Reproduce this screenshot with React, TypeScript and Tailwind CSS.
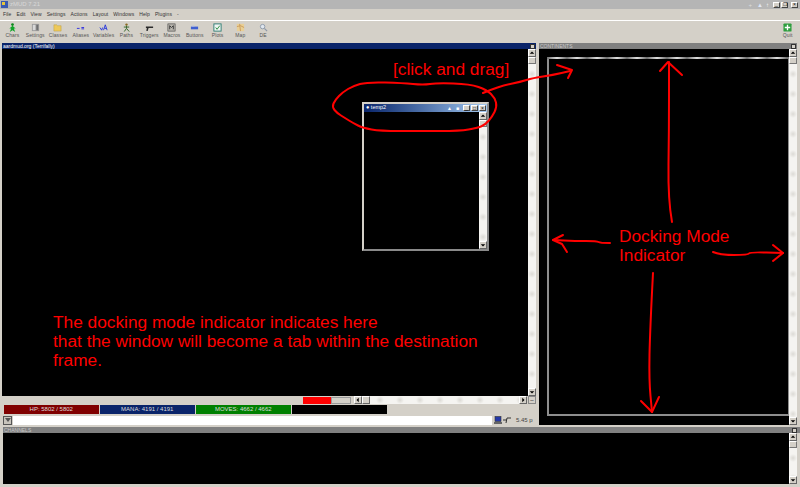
const menus = ['File', 'Edit', 'View', 'Settings', 'Actions', 'Layout', 'Windows', 'Help', 'Plugins', '-'];

function ToolIcon({ name }: { name: string }) {
  switch (name) {
    case 'Chars':
      return (
        <svg width="9" height="9" viewBox="0 0 10 10">
          <circle cx="5" cy="1.8" r="1.5" fill="#0a8a1a" />
          <path d="M5 3 8.500 6 6.500 6 8 10 5 8 2 10 3.500 6 1.500 6Z" fill="#12a52a" />
        </svg>
      );
    case 'Settings':
      return (
        <svg width="9" height="9" viewBox="0 0 10 10">
          <rect x="1" y="1" width="8" height="8" fill="#9a9a9a" />
          <rect x="2" y="2" width="3" height="6" fill="#d8d8d8" />
          <rect x="6" y="2" width="2" height="6" fill="#6f6f6f" />
        </svg>
      );
    case 'Classes':
      return (
        <svg width="9" height="9" viewBox="0 0 10 10">
          <path d="M1 2h3l1 1h4v6H1Z" fill="#eec95a" stroke="#b89a3a" strokeWidth="0.5" />
        </svg>
      );
    case 'Aliases':
      return (
        <svg width="9" height="9" viewBox="0 0 10 10">
          <path d="M1 6h3M6 5h3M6 6.500h3" stroke="#2a2ae0" strokeWidth="1" />
        </svg>
      );
    case 'Variables':
      return (
        <svg width="9" height="9" viewBox="0 0 10 10">
          <path d="M1 5 3 8 4 5M5 8 7 2 9 8M6 6h2" stroke="#2233dd" strokeWidth="1" fill="none" />
        </svg>
      );
    case 'Paths':
      return (
        <svg width="9" height="9" viewBox="0 0 10 10">
          <circle cx="5" cy="1.8" r="1.3" fill="#8a6a20" />
          <path d="M5 3v3L2.500 9.500M5 6l3 3.500M2 4.500h6" stroke="#3c6a30" strokeWidth="1.100" fill="none" />
        </svg>
      );
    case 'Triggers':
      return (
        <svg width="9" height="9" viewBox="0 0 10 10">
          <path d="M1 4h8v1.500H4L3 9H1.500l.5-3.500H1Z" fill="#2b2b2b" />
        </svg>
      );
    case 'Macros':
      return (
        <svg width="9" height="9" viewBox="0 0 10 10">
          <rect x="1" y="1" width="8" height="8" fill="#b9b6ae" stroke="#444" strokeWidth="0.700" />
          <path d="M3 7V3l2 2 2-2v4" stroke="#333" fill="none" />
        </svg>
      );
    case 'Buttons':
      return (
        <svg width="9" height="9" viewBox="0 0 10 10">
          <rect x="1" y="4" width="8" height="3" fill="#3f5fd0" />
          <rect x="2" y="3" width="3" height="1" fill="#a9b8ea" />
        </svg>
      );
    case 'Plots':
      return (
        <svg width="9" height="9" viewBox="0 0 10 10">
          <rect x="1" y="1" width="8" height="8" fill="#eef4f2" stroke="#287a70" />
          <path d="M3 5 4.500 7 7.500 3" stroke="#1c8a34" fill="none" />
        </svg>
      );
    case 'Map':
      return (
        <svg width="9" height="9" viewBox="0 0 10 10">
          <rect x="1" y="1" width="8" height="8" fill="#e9cf95" />
          <path d="M1 4 5 3l4 2M4 1l1 8" stroke="#c89a5a" fill="none" />
        </svg>
      );
    case 'DE':
      return (
        <svg width="9" height="9" viewBox="0 0 10 10">
          <circle cx="4" cy="4" r="2.500" fill="#dfe6ee" stroke="#8c98a8" />
          <path d="M6 6l3 3" stroke="#8c98a8" strokeWidth="1.400" />
        </svg>
      );
    default:
      return (
        <svg width="9" height="9" viewBox="0 0 10 10">
          <rect x="0.500" y="0.500" width="9" height="9" rx="1" fill="#2e9e3e" />
          <path d="M2 5h6M5 2v6" stroke="#fff" strokeWidth="1.500" />
        </svg>
      );
  }
}

function ToolButton({ label }: { label: string }) {
  return (
    <div className="flex w-[22.8px] flex-col items-center">
      <ToolIcon name={label} />
      <span className="text-[5px] leading-[7px] tracking-[0.1px] text-[#555]">{label}</span>
    </div>
  );
}

function ScrollButton({ dir }: { dir: 'up' | 'down' | 'left' | 'right' }) {
  const points = {
    up: '1,5 4,2 7,5',
    down: '1,3 4,6 7,3',
    left: '5,1 2,4 5,7',
    right: '3,1 6,4 3,7',
  }[dir];
  return (
    <div className="flex h-[8px] w-[8px] shrink-0 items-center justify-center border border-t-white border-l-white border-r-[#666] border-b-[#666] bg-[#d4d0c8]">
      <svg width="6" height="6" viewBox="0 0 8 8">
        <polygon points={points} fill="#000" />
      </svg>
    </div>
  );
}

function VScroll() {
  return (
    <div className="flex w-[8px] shrink-0 flex-col">
      <ScrollButton dir="up" />
      <div className="h-[7px] shrink-0 border border-t-white border-l-white border-r-[#777] border-b-[#777] bg-[#d4d0c8]" />
      <div className="flex-1 bg-[radial-gradient(circle,#dcdad5_0,#f5f4f1_4px)] bg-[length:8px_20px]" />
      <ScrollButton dir="down" />
    </div>
  );
}

function PaneTitle({ text, active }: { text: string; active?: boolean }) {
  return (
    <div className={`flex h-[6px] shrink-0 items-center text-[5px] leading-[6px] ${active ? 'bg-[#0a246a] text-white' : 'bg-[#808080] text-[#c8c8c8]'}`}>
      <span className="pl-[1px]">{text}</span>
    </div>
  );
}

function CloseBox() {
  return <div className="h-[5px] w-[5px] border border-[#333] bg-[#d4d0c8]" />;
}

function StatBar({ label, bg }: { label: string; bg: string }) {
  return (
    <div className={`flex h-[9px] w-[94.500px] items-center justify-center text-[6px] text-[#ddd] ${bg}`}>{label}</div>
  );
}

function WinButton({ glyph }: { glyph: string }) {
  return (
    <div className="flex h-[6px] w-[7px] items-center justify-center border border-t-white border-l-white border-r-[#444] border-b-[#444] bg-[#d4d0c8] text-[5px] leading-none text-black">
      {glyph}
    </div>
  );
}

// rounds a list of hand-picked points into a wobbly pen stroke
function smooth(pts: number[][], closed = false) {
  const mid = (a: number[], b: number[]) => [(a[0] + b[0]) / 2, (a[1] + b[1]) / 2];
  if (closed) {
    const start = mid(pts[pts.length - 1], pts[0]);
    let d = `M${start[0]} ${start[1]}`;
    pts.forEach((p, i) => {
      const m = mid(p, pts[(i + 1) % pts.length]);
      d += ` Q${p[0]} ${p[1]} ${m[0]} ${m[1]}`;
    });
    return d + 'Z';
  }
  let d = `M${pts[0][0]} ${pts[0][1]}`;
  for (let i = 1; i < pts.length - 1; i++) {
    const m = mid(pts[i], pts[i + 1]);
    d += ` Q${pts[i][0]} ${pts[i][1]} ${m[0]} ${m[1]}`;
  }
  const last = pts[pts.length - 1];
  return d + ` L${last[0]} ${last[1]}`;
}

const ellipse = [
  [332, 107], [335, 100], [343, 92], [353, 86], [367, 82], [403, 83], [423, 85], [437, 83], [470, 84], [487, 90],
  [495, 98], [497, 107], [492, 117], [485, 125], [477, 128], [460, 131], [420, 131], [380, 131], [363, 128], [353, 123], [345, 118], [337, 113],
];

export default function App() {
  return (
    <div className="relative flex h-[487px] w-[800px] flex-col overflow-hidden bg-[#d4d0c8] font-['Liberation_Sans',Arial,sans-serif]">
      {/* title bar */}
      <div className="flex h-[9px] shrink-0 items-center bg-[#b5b5b5] pl-[1px] pr-[2px]">
        <svg width="7" height="7" viewBox="0 0 7 7">
          <rect width="7" height="7" fill="#3a5ab0" />
          <rect x="1" y="1" width="3" height="3" fill="#e8c63a" />
        </svg>
        <span className="ml-[2px] text-[6px] text-[#d8d8d8]">zMUD 7.21</span>
        <div className="ml-auto flex items-center gap-[1px]">
          <span className="mr-[4px] text-[6px] leading-none text-[#ddd]">+</span>
          <span className="mr-[2px] text-[6px] leading-none text-[#dfe6f5]">▲</span>
          <span className="mr-[3px] text-[6px] leading-none text-white">↑</span>
          <WinButton glyph="_" />
          <WinButton glyph="❐" />
          <div className="w-[1px]" />
          <WinButton glyph="×" />
        </div>
      </div>

      {/* menu */}
      <div className="flex h-[11px] shrink-0 items-center gap-[5px] pl-[3px] text-[5px] tracking-[0.1px] text-[#333]">
        {menus.map((m) => (
          <span key={m}>{m}</span>
        ))}
      </div>
      <div className="h-[1px] shrink-0 bg-white" />

      {/* toolbar */}
      <div className="flex h-[22px] shrink-0 items-start pl-[1px] pt-[2px]">
        {['Chars', 'Settings', 'Classes', 'Aliases', 'Variables', 'Paths', 'Triggers', 'Macros', 'Buttons', 'Plots', 'Map', 'DE'].map((t) => (
          <ToolButton key={t} label={t} />
        ))}
        <div className="ml-auto pr-[1px]">
          <ToolButton label="Quit" />
        </div>
      </div>

      {/* docked panes */}
      <div className="flex h-[382px] shrink-0">
        <div className="flex w-[536px] shrink-0 flex-col pl-[2px]">
          <div className="relative">
            <PaneTitle text="aardmud.org (Terrifally)" active />
            <div className="absolute right-[1px] top-[1px]"><CloseBox /></div>
          </div>
          <div className="flex h-[347px] shrink-0">
            <div className="flex-1 bg-black" />
            <VScroll />
          </div>
          <div className="flex h-[8px] shrink-0 items-center pl-[1px]">
            <div className="w-[300px]" />
            <div className="h-[7px] w-[28px] bg-[#ff0000]" />
            <div className="h-[7px] w-[20px] border border-[#999] bg-[#d4d0c8]" />
            <div className="w-[3px]" />
            <ScrollButton dir="left" />
            <div className="h-[8px] w-[8px] border border-t-white border-l-white border-r-[#666] border-b-[#666] bg-[#d4d0c8]" />
            <div className="h-[8px] flex-1 bg-[radial-gradient(circle,#dcdad5_0,#f5f4f1_4px)] bg-[length:20px_8px]" />
            <ScrollButton dir="right" />
            <div className="ml-[1px] flex h-[8px] w-[8px] items-center justify-center border border-[#888] bg-[#d4d0c8] text-[6px] leading-none">–</div>
          </div>
          <div className="flex shrink-0 gap-[1.500px] pl-[2px] pt-[1px]">
            <StatBar label="HP: 5802 / 5802" bg="bg-[#800000]" />
            <StatBar label="MANA: 4191 / 4191" bg="bg-[#0a246a]" />
            <StatBar label="MOVES: 4662 / 4662" bg="bg-[#008000]" />
            <StatBar label="" bg="bg-black" />
          </div>
          <div className="mt-[1px] flex h-[10px] shrink-0 items-center pl-[1px]">
            <div className="flex h-[9px] w-[9px] items-center justify-center border border-[#555] bg-[#c8c4bc]">
              <svg width="6" height="5" viewBox="0 0 6 5"><path d="M0 0h6L3 4Z" fill="#555" /></svg>
            </div>
            <div className="ml-[1px] h-[9px] w-[479px] bg-white" />
            <div className="ml-[2px] flex items-center">
              <svg width="8" height="8" viewBox="0 0 8 8">
                <rect x="1" y="0.500" width="6" height="5" fill="#2438a8" stroke="#333" strokeWidth="0.600" />
                <rect y="6" width="8" height="2" fill="#666" />
              </svg>
              <svg className="ml-[1px]" width="8" height="8" viewBox="0 0 8 8">
                <path d="M0 4h4M4 2h4M4 2 3 7" stroke="#333" fill="none" />
              </svg>
              <span className="ml-[5px] text-[6px] text-[#444]">5.45 p</span>
            </div>
          </div>
        </div>

        <div className="ml-[3px] flex w-[258px] shrink-0 flex-col">
          <div className="relative">
            <PaneTitle text="CONTINENTS" />
            <div className="absolute right-[1px] top-[1px]"><CloseBox /></div>
          </div>
          <div className="flex flex-1">
            <div className="flex-1 bg-black pl-[8px] pt-[8px] pb-[9px]">
              <div className="flex h-full flex-col border-2 border-t-0 border-r-[1.500px] border-[#8e8e8e]">
                <div className="-ml-[2px] -mr-[1.500px] h-[2px] bg-[repeating-linear-gradient(90deg,#6f6f6f_0,#e0e0e0_10px,#6f6f6f_20px)]" />
              </div>
            </div>
            <VScroll />
          </div>
        </div>
      </div>

      {/* channels */}
      <div className="mt-[2px] flex flex-col pl-[3px] pr-[3px]">
        <div className="relative -mr-[3px]">
          <PaneTitle text="CHANNELS" />
          <div className="absolute right-[3px] top-[1px]"><CloseBox /></div>
        </div>
        <div className="flex h-[51px]">
          <div className="flex-1 bg-black" />
          <VScroll />
        </div>
      </div>

      {/* floating window being dragged */}
      <div className="absolute left-[362px] top-[102px] flex h-[149px] w-[127px] flex-col border-2 border-[#d4d0c8] border-r-[#8a8a8a] border-b-[#8a8a8a] bg-black">
        <div className="flex h-[8px] shrink-0 items-center bg-gradient-to-r from-[#0a246a] to-[#a6caf0] pl-[2px] pr-[1px] text-[5.500px] leading-none text-white">
          <span>● temp2</span>
          <div className="ml-auto flex items-center gap-[1px]">
            <span className="mr-[3px] text-[5px] leading-none">▲</span>
            <span className="mr-[3px] text-[5px] leading-none">■</span>
            <WinButton glyph="_" />
            <WinButton glyph="□" />
            <WinButton glyph="×" />
          </div>
        </div>
        <div className="flex flex-1">
          <div className="flex-1" />
          <VScroll />
        </div>
      </div>

      {/* hand-drawn annotations */}
      <svg className="pointer-events-none absolute inset-0" width="800" height="487" viewBox="0 0 800 487" fill="none" stroke="#ff0000" strokeWidth="2" strokeLinejoin="round" strokeLinecap="round">
        <path d={smooth(ellipse, true)} />
        <path d={smooth([[483, 93], [490, 90], [505, 85], [520, 82], [533, 78], [553, 75], [570, 71]])} />
        <path d="M557 65 572 70 568 78" />
        <path d={smooth([[672, 222], [668, 200], [669, 130], [669, 62]])} />
        <path d="M660 71 668 62 682 75" />
        <path d={smooth([[610, 243], [600, 243], [597, 241], [575, 241], [553, 240]])} />
        <path d="M563 235 553 240 562 244 567 252" />
        <path d={smooth([[713, 252], [720, 255], [748, 255], [750, 252], [783, 253]])} />
        <path d="M773 245 783 253 773 261" />
        <path d={smooth([[653, 273], [650, 330], [649, 380], [652, 412]])} />
        <path d="M641 401 652 412 659 397" />
      </svg>
      <div className="pointer-events-none absolute left-[393px] top-[60px] text-[17.300px] leading-[19px] text-[#ff0000]">[click and drag]</div>
      <div className="pointer-events-none absolute left-[619px] top-[227px] text-[17.300px] leading-[19px] text-[#ff0000]">
        Docking Mode
        <br />
        Indicator
      </div>
      <div className="pointer-events-none absolute left-[53px] top-[313px] text-[17.300px] leading-[19px] text-[#ff0000]">
        The docking mode indicator indicates here
        <br />
        that the window will become a tab within the destination
        <br />
        frame.
      </div>
    </div>
  );
}
